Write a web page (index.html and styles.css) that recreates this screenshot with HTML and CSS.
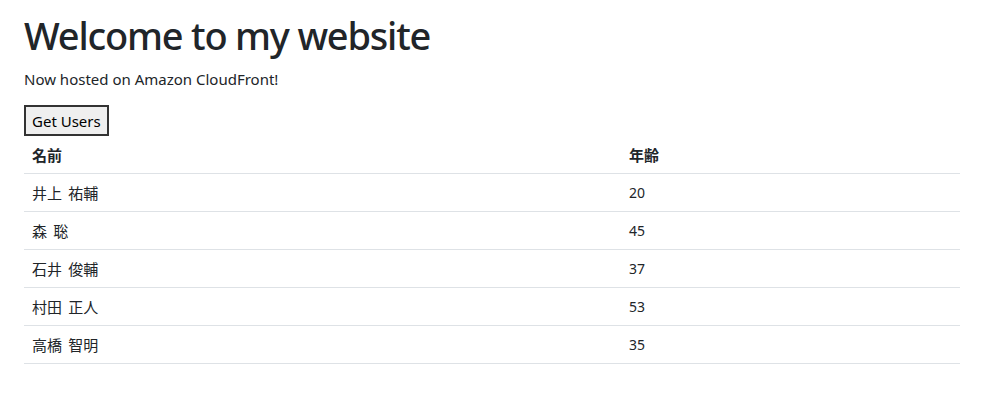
FILE: index.html
```html
<!DOCTYPE html>
<html lang="ja">
  <head>
    <meta charset="UTF-8">
    <title>Welcome</title>
    <link rel="stylesheet" href="styles.css">
  </head>
  <body>
    <div class="container">
      <h1>Welcome to my website</h1>
      <p class="lead">Now hosted on Amazon CloudFront!</p>
      <button id="get-users">Get Users</button>
      <table class="users">
        <thead>
          <tr>
            <th class="col-name">名前</th>
            <th>年齢</th>
          </tr>
        </thead>
        <tbody>
          <tr><td>井上 祐輔</td><td>20</td></tr>
          <tr><td>森 聡</td><td>45</td></tr>
          <tr><td>石井 俊輔</td><td>37</td></tr>
          <tr><td>村田 正人</td><td>53</td></tr>
          <tr><td>高橋 智明</td><td>35</td></tr>
        </tbody>
      </table>
    </div>
  </body>
</html>
```

FILE: styles.css
```css
body {
  margin: 0;
  font-family: "Noto Sans", "Noto Sans CJK JP", sans-serif;
  color: #212529;
  background-color: #fff;
}

.container {
  width: 936px;
  padding: 13px 24px 0;
}

h1 {
  margin: 0 0 9px;
  font-size: 38px;
  font-weight: 500;
  letter-spacing: -1.2px;
  line-height: 1.2;
}

.lead {
  margin: 0 0 15px;
  font-size: 15px;
  line-height: 1.5;
}

button {
  display: block;
  box-sizing: border-box;
  height: 31px;
  font-family: "Noto Sans", sans-serif;
  font-size: 15px;
  line-height: 20px;
  padding: 0 6px;
  background-color: #efefef;
  border: 2px solid #333;
  color: #000;
}

.users {
  width: 100%;
  border-collapse: collapse;
  font-size: 15px;
  font-family: "Noto Sans CJK JP", "Noto Sans", sans-serif;
}

.users th,
.users td {
  text-align: left;
  padding: 8px;
  line-height: 21px;
  word-spacing: 3px;
  border-bottom: 1px solid #dee2e6;
}

.users td:last-child {
  font-family: "Noto Sans", sans-serif;
  font-size: 14px;
}

.users th {
  font-weight: 700;
}

.col-name {
  width: 581px;
}
```
